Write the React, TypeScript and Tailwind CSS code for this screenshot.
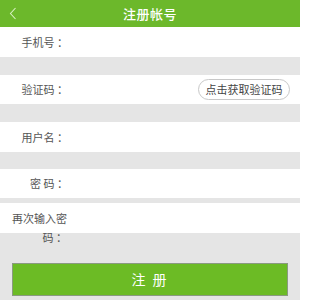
const FONT = { fontFamily: '"Noto Sans CJK SC", "Noto Sans", sans-serif' };

function Row({
  label,
  className = "",
  children,
}: {
  label: string;
  className?: string;
  children?: React.ReactNode;
}) {
  return (
    <div className={`flex items-center bg-white ${className}`}>
      <div className="w-[56px] ml-[12px] text-right text-[11px] text-[#555]">{label}</div>
      <div className="flex-1" />
      {children}
    </div>
  );
}

export default function App() {
  return (
    <div className="w-[300px] h-[300px] overflow-hidden bg-[#e5e5e5] flex flex-col" style={FONT}>
      {/* header */}
      <div className="relative h-[27px] bg-[#6cb82b] flex items-center justify-center">
        <svg className="absolute left-[9px] top-[7px]" width="8" height="13" viewBox="0 0 8 13">
          <polyline points="6.5,1 1.5,6.5 6.5,12" fill="none" stroke="#d8f0c4" strokeWidth="1.1" />
        </svg>
        <span className="text-[13px] font-medium text-white tracking-[0.5px]">注册帐号</span>
      </div>

      <Row label="手机号 ：" className="h-[30px]" />
      <div className="h-[18px]" />
      <Row label="验证码 ：" className="h-[29px]">
        <button className="mr-[10px] h-[21px] w-[92px] rounded-full border border-[#c8c8c8] bg-white text-[11px] text-[#444] leading-none">
          点击获取验证码
        </button>
      </Row>
      <div className="h-[18px]" />
      <Row label="用户名 ：" className="h-[30px]" />
      <div className="h-[17px]" />
      <Row label="密 码 ：" className="h-[29px]" />
      <div className="h-[5px]" />
      <div className="h-[30px] bg-white flex items-start">
        <div className="w-[56px] ml-[11px] pt-[6px] text-right text-[11px] leading-[19px] text-[#555]">
          再次输入密码 ：
        </div>
      </div>

      <div className="h-[30px]" />
      <button className="mx-[12px] h-[33px] bg-[#6cbb25] border border-[#8a9a80] text-white text-[14px] tracking-[2px]">
        注 册
      </button>
    </div>
  );
}
